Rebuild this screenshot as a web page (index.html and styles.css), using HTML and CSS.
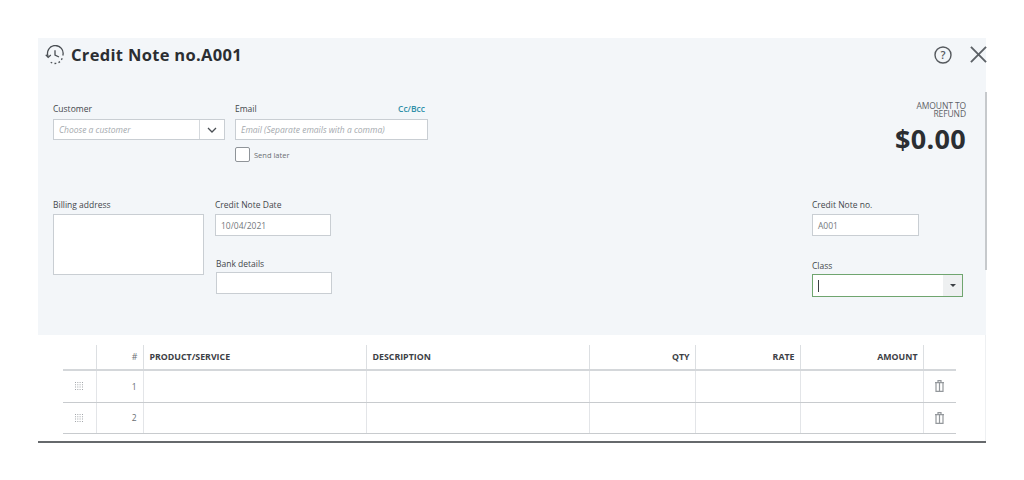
FILE: index.html
```html
<!DOCTYPE html>
<html lang="en">
<head>
<meta charset="utf-8">
<title>Credit Note no.A001</title>
<link rel="stylesheet" href="styles.css">
</head>
<body>
<main class="window">
  <section class="panel">
    <header class="head">
      <svg class="history" viewBox="0 0 20 20" width="20" height="20" fill="none" stroke="#4a4f54" stroke-width="1.3">
        <path d="M3.2 11.500A7.800 7.800 0 1 1 17.800 10.500"/>
        <path d="M17.200 13.300l-.8 1.600M15 16.600l-1.500 1M11.300 18.400l-1.800.1M7.200 18l-1.500-.8"/>
        <path d="M.8 9.800l2.400 2.600 2.600-2.300"/>
        <path d="M10 5.200v5l4 1.800"/>
      </svg>
      <h1 class="title">Credit Note no.A001</h1>
      <svg class="help" viewBox="0 0 18 18" width="18" height="18" fill="none" stroke="#55595e" stroke-width="1.400">
        <circle cx="9" cy="9" r="8"/>
        <text x="9" y="13" class="help-mark" text-anchor="middle">?</text>
      </svg>
      <svg class="close" viewBox="0 0 18 18" width="17" height="17" fill="none" stroke="#5c6166" stroke-width="2">
        <path d="M1 1l16 16M17 1L1 17"/>
      </svg>
    </header>

    <div class="row row-top">
      <div class="field customer">
        <label class="label">Customer</label>
        <div class="box combo">
          <span class="placeholder">Choose a customer</span>
          <span class="chevron">
            <svg viewBox="0 0 10 6" width="10" height="6" fill="none" stroke="#4a4f54" stroke-width="1.300"><path d="M1 1l4 4 4-4"/></svg>
          </span>
        </div>
      </div>
      <div class="field email">
        <div class="label-row">
          <label class="label">Email</label>
          <a class="cc">Cc/Bcc</a>
        </div>
        <div class="box input"><span class="placeholder">Email (Separate emails with a comma)</span></div>
        <div class="send">
          <span class="check"></span>
          <span class="send-text">Send later</span>
        </div>
      </div>
      <div class="amount">
        <div class="amount-label">AMOUNT TO<br>REFUND</div>
        <div class="amount-value">$0.00</div>
      </div>
    </div>

    <div class="row row-bottom">
      <div class="field billing">
        <label class="label">Billing address</label>
        <div class="box area"></div>
      </div>
      <div class="dates">
        <div class="field date">
          <label class="label">Credit Note Date</label>
          <div class="box input"><span class="value">10/04/2021</span></div>
        </div>
        <div class="field bank">
          <label class="label">Bank details</label>
          <div class="box input"></div>
        </div>
      </div>
      <div class="right">
        <div class="field note-no">
          <label class="label">Credit Note no.</label>
          <div class="box input"><span class="value">A001</span></div>
        </div>
        <div class="field class-field">
          <label class="label">Class</label>
          <div class="box select">
            <span class="caret"></span>
            <span class="arrow"><i class="tri"></i></span>
          </div>
        </div>
      </div>
    </div>
    <div class="scrollbar"></div>
  </section>

  <section class="lines">
    <table class="table">
      <colgroup>
        <col class="c-grip"><col class="c-num"><col class="c-prod"><col class="c-desc">
        <col class="c-qty"><col class="c-rate"><col class="c-amt"><col class="c-del">
      </colgroup>
      <thead>
        <tr>
          <th></th>
          <th class="end num-head">#</th>
          <th>PRODUCT/SERVICE</th>
          <th>DESCRIPTION</th>
          <th class="end">QTY</th>
          <th class="end">RATE</th>
          <th class="end">AMOUNT</th>
          <th></th>
        </tr>
      </thead>
      <tbody>
        <tr>
          <td class="mid"><svg class="grip" viewBox="0 0 8 8" width="8" height="8" fill="#a3a7ab"><path d="M0 0h1v1H0zM2.300 0h1v1h-1zM4.600 0h1v1h-1zM7 0h1v1H7zM0 2.300h1v1H0zM2.300 2.300h1v1h-1zM4.600 2.300h1v1h-1zM7 2.300h1v1H7zM0 4.600h1v1H0zM2.300 4.600h1v1h-1zM4.600 4.600h1v1h-1zM7 4.600h1v1H7zM0 7h1v1H0zM2.300 7h1v1h-1zM4.600 7h1v1h-1zM7 7h1v1H7z"/></svg></td>
          <td class="end num">1</td><td></td><td></td><td></td><td></td><td></td>
          <td class="mid"><svg class="trash" viewBox="0 0 9 12" width="9" height="12" fill="none" stroke="#94989c" stroke-width="1.200"><path d="M0 2.600h9M3 2.600V.6h3v2M1 2.600v8.800h7V2.600M4.500 2.600v8.800"/></svg></td>
        </tr>
        <tr>
          <td class="mid"><svg class="grip" viewBox="0 0 8 8" width="8" height="8" fill="#a3a7ab"><path d="M0 0h1v1H0zM2.300 0h1v1h-1zM4.600 0h1v1h-1zM7 0h1v1H7zM0 2.300h1v1H0zM2.300 2.300h1v1h-1zM4.600 2.300h1v1h-1zM7 2.300h1v1H7zM0 4.600h1v1H0zM2.300 4.600h1v1h-1zM4.600 4.600h1v1h-1zM7 4.600h1v1H7zM0 7h1v1H0zM2.300 7h1v1h-1zM4.600 7h1v1h-1zM7 7h1v1H7z"/></svg></td>
          <td class="end num">2</td><td></td><td></td><td></td><td></td><td></td>
          <td class="mid"><svg class="trash" viewBox="0 0 9 12" width="9" height="12" fill="none" stroke="#94989c" stroke-width="1.200"><path d="M0 2.600h9M3 2.600V.6h3v2M1 2.600v8.800h7V2.600M4.500 2.600v8.800"/></svg></td>
        </tr>
      </tbody>
    </table>
  </section>
</main>
</body>
</html>
```

FILE: styles.css
```css
* { box-sizing: border-box; }
html, body { margin: 0; height: 100%; background: #fff; }
body { padding: 38px 38px 0; font-family: "Open Sans", "Liberation Sans", sans-serif; color: #3c4045; overflow: hidden; }

.window { width: 948px; height: 405px; border-bottom: 2px solid #66696c; display: flex; flex-direction: column; }

.panel { position: relative; height: 297px; background: #f3f6f9; padding: 0 20px 0 15px; flex: none; }

.head { height: 64px; display: flex; align-items: flex-start; padding-top: 7px; margin-left: -8px; margin-right: -21px; }
.history { flex: none; }
.title { margin: 0 0 0 6px; font-size: 16.5px; line-height: 20px; font-weight: 700; color: #2b2e32; letter-spacing: .32px; white-space: nowrap; }
.help { margin-left: auto; margin-top: 1px; flex: none; }
.help-mark { font-family: "Open Sans", sans-serif; font-size: 11px; font-weight: 600; fill: #55595e; stroke: none; }
.close { margin-left: 18px; margin-top: 1px; flex: none; }

.row { display: flex; }
.row-top { height: 96px; }
.row-bottom { height: 137px; }

.label { display: block; font-size: 8.5px; line-height: 14px; color: #43474c; height: 17px; white-space: nowrap; }
.row-bottom .label { height: 16px; }
.box { background: #fff; border: 1px solid #c9ced3; display: flex; align-items: center; }
.placeholder { font-size: 8.5px; font-style: italic; color: #a4a9ae; white-space: nowrap; }
.value { font-size: 8.5px; color: #74787d; }

.customer { width: 172px; }
.combo { height: 21px; padding-left: 5px; }
.combo .placeholder { flex: 1; }
.chevron { width: 25px; height: 100%; border-left: 1px solid #d5d9dd; display: flex; align-items: center; justify-content: center; flex: none; }

.email { width: 193px; margin-left: 10px; }
.label-row { display: flex; justify-content: space-between; padding-right: 3px; }
.cc { font-size: 8.5px; line-height: 14px; font-weight: 600; color: #2f8fa8; }
.email .input { height: 21px; padding-left: 5px; }
.send { display: flex; align-items: center; margin-top: 7px; }
.check { width: 15px; height: 15px; background: #fff; border: 1px solid #8f9499; border-radius: 2px; flex: none; }
.send-text { margin-left: 4px; font-size: 7.5px; color: #6a6e73; }

.amount { margin-left: auto; text-align: right; }
.amount-label { font-size: 8.5px; line-height: 8px; color: #5e6267; letter-spacing: -.1px; }
.amount-value { margin-top: 4px; font-size: 27px; line-height: 34px; font-weight: 700; color: #2b2e32; letter-spacing: .3px; }

.billing { width: 151px; }
.area { height: 61px; }

.dates { width: 117px; margin-left: 11px; }
.date .input { width: 116px; height: 22px; padding-left: 5px; }
.bank { margin-left: 1px; margin-top: 21px; }
.row-bottom .bank .label { height: 15px; }
.bank .input { width: 116px; height: 22px; }

.right { margin-left: auto; width: 151px; margin-right: 3px; }
.note-no .input { width: 107px; height: 22px; padding-left: 5px; }
.class-field { margin-top: 23px; }
.row-bottom .class-field .label { height: 15px; }
.select { height: 23px; border-color: #6fa56f; padding-left: 5px; }
.caret { width: 1px; height: 12px; background: #3c4045; }
.arrow { margin-left: auto; width: 19px; height: 100%; background: #eef0f1; display: flex; align-items: center; justify-content: center; }
.tri { width: 0; height: 0; border-left: 3px solid transparent; border-right: 3px solid transparent; border-top: 3px solid #3c4045; }

.scrollbar { position: absolute; right: -1px; top: 54px; width: 2px; height: 178px; background: #c6c9cc; }

.lines { flex: 1; padding: 10px 0 0 25px; border-right: 1px solid #eef0f2; }
.table { border-collapse: collapse; table-layout: fixed; width: 893px; }
.c-grip { width: 33px; } .c-num { width: 47px; } .c-prod { width: 223px; } .c-desc { width: 223px; }
.c-qty { width: 106px; } .c-rate { width: 105px; } .c-amt { width: 123px; } .c-del { width: 33px; }

.table th { height: 25px; padding: 0 5px 0 6px; font-size: 8.8px; font-weight: 700; color: #3c4045; text-align: left; border-right: 1px solid #dcdfe2; border-bottom: 2px solid #d4d7da; white-space: nowrap; }
.table th:last-child, .table td:last-child { border-right: 0; }
.table th.end, .table td.end { text-align: right; }
.table th.num-head { font-weight: 400; color: #6a6e73; }
.table tbody tr:first-child td { height: 32px; }
.table td { height: 31px; padding: 0 6px; border-right: 1px solid #e3e5e8; border-bottom: 1px solid #c8cbce; }
.table td.mid { padding: 0; }
.table td.num { font-size: 8.5px; color: #6a6e73; }
.grip, .trash { display: block; margin: 0 auto; }
```
